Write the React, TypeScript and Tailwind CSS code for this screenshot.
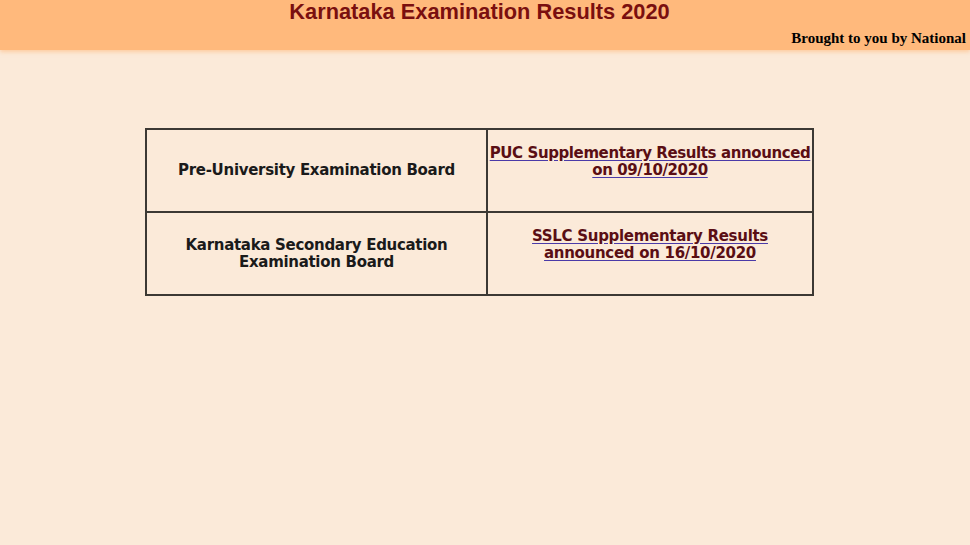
export default function App() {
  return (
    <div className="min-h-[545px] w-full bg-[#fbead9]">
      <div className="h-[50px] bg-[#ffb97c] shadow-[0_2px_4px_rgba(255,185,124,0.6)]">
        <h1 className="text-center pr-[11px] text-[21.8px] leading-[24px] font-bold text-[#7a0f0f] font-['Liberation_Sans',Arial,sans-serif]">
          Karnataka Examination Results 2020
        </h1>
        <div className="text-right pr-[4px] pt-[5px] text-[15px] leading-[18px] font-bold text-black font-['Liberation_Serif','Times_New_Roman',serif]">
          Brought to you by National
        </div>
      </div>

      <div className="pt-[78px] pr-[11px] flex justify-center">
        <table className="w-[669px] table-fixed border-collapse border-2 border-[#4f463c] font-['DejaVu_Sans',Verdana,sans-serif] font-bold text-[15px] leading-[17px] tracking-[-0.3px]">
          <tbody>
            <tr className="h-[83px]">
              <td className="w-[341px] border-2 border-[#3c3934] text-center align-middle text-[#1a1a1a] px-2">
                Pre-University Examination Board
              </td>
              <td className="border-2 border-[#3c3934] text-center align-middle pb-[17px] px-0 whitespace-nowrap tracking-[-0.4px]">
                <a
                  href="#"
                  className="text-[#5a0e14] underline decoration-[#4a3aa8] underline-offset-[2px]"
                >
                  PUC Supplementary Results announced
                  <br />
                  on 09/10/2020
                </a>
              </td>
            </tr>
            <tr className="h-[83px]">
              <td className="border-2 border-[#3c3934] text-center align-middle text-[#1a1a1a] px-[36px]">
                Karnataka Secondary Education Examination Board
              </td>
              <td className="border-2 border-[#3c3934] text-center align-middle pb-[17px] px-[40px]">
                <a
                  href="#"
                  className="text-[#5a0e14] underline decoration-[#4a3aa8] underline-offset-[2px]"
                >
                  SSLC Supplementary Results announced on 16/10/2020
                </a>
              </td>
            </tr>
          </tbody>
        </table>
      </div>
    </div>
  );
}
